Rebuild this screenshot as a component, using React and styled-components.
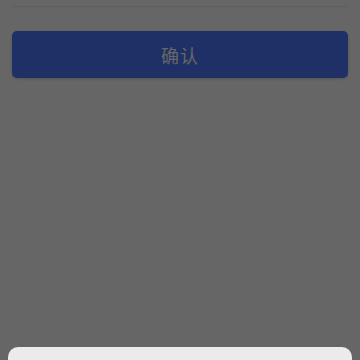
import React from "react";
import styled, { createGlobalStyle } from "styled-components";

const GlobalStyle = createGlobalStyle`
  html, body {
    margin: 0;
    padding: 0;
    background: #ffffff;
    font-family: "Noto Sans", "Noto Sans CJK SC", sans-serif;
  }
`;

const Page = styled.div`
  width: 360px;
  height: 360px;
  overflow: hidden;
  position: relative;
  background: #ffffff;
  box-sizing: border-box;
  padding: 0 12px;
`;

const Divider = styled.div`
  margin-top: 6px;
  height: 1px;
  background: #ececec;
`;

const ConfirmButton = styled.button`
  display: block;
  width: 100%;
  height: 47px;
  margin-top: 24px;
  border: none;
  border-radius: 5px;
  background: #4b78ff;
  color: #ffffff;
  font-family: "Noto Sans", "Noto Sans CJK SC", sans-serif;
  font-size: 18px;
  letter-spacing: 1px;
  box-shadow: 0 1px 3px rgba(0, 0, 0, 0.2);
`;

const Mask = styled.div`
  position: absolute;
  inset: 0;
  background: rgba(0, 0, 0, 0.6);
`;

const Sheet = styled.div`
  position: absolute;
  left: 8px;
  right: 8px;
  top: 347px;
  height: 200px;
  background: #ebebeb;
  border-radius: 10px 10px 0 0;
`;

export default function App() {
  return (
    <>
      <GlobalStyle />
      <Page>
        <Divider />
        <ConfirmButton>确认</ConfirmButton>
        <Mask />
        <Sheet />
      </Page>
    </>
  );
}
